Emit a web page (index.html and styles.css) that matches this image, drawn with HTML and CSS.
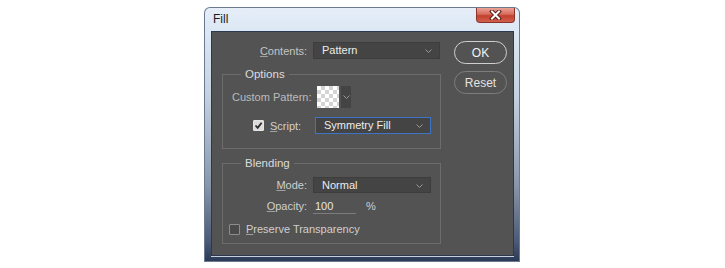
FILE: index.html
```html
<!DOCTYPE html>
<html>
<head>
    <title>Fill</title>
    <link rel="stylesheet" href="styles.css">
</head>
<body>
    <div class="window">
        <div class="titlebar">
            <span class="title">Fill</span>
            <span class="close">
                <svg width="13" height="10" viewBox="0 0 13 10">
                    <path d="M3 1.5 L10 8.5 M10 1.5 L3 8.5" stroke="#5a1d16" stroke-width="4" stroke-linecap="square"/>
                    <path d="M3 1.5 L10 8.5 M10 1.5 L3 8.5" stroke="#ffffff" stroke-width="2" stroke-linecap="square"/>
                </svg>
            </span>
        </div>
        <div class="client">
            <div class="main">
                <div class="row contents">
                    <label class="lbl right"><u>C</u>ontents:</label>
                    <div class="select sel-contents">Pattern<svg class="chev" width="7" height="4" viewBox="0 0 7 4"><path d="M0.5 0.5 L3.5 3.5 L6.5 0.5" fill="none" stroke="#9a9a9a"/></svg></div>
                </div>

                <fieldset class="group options">
                    <legend>Options</legend>
                    <div class="row pattern">
                        <label class="lbl dim pat-lbl">Custom Pattern:</label>
                        <span class="swatch"></span>
                        <span class="swatch-btn"><svg width="7" height="4" viewBox="0 0 7 4"><path d="M0.5 0.5 L3.5 3.5 L6.5 0.5" fill="none" stroke="#9a9a9a"/></svg></span>
                    </div>
                    <div class="row script">
                        <span class="check on">
                            <svg width="9" height="9" viewBox="0 0 9 9"><path d="M1.5 4.5 L3.7 6.8 L7.6 1.8" fill="none" stroke="#2b2b2b" stroke-width="1.8"/></svg>
                        </span>
                        <label class="lbl script-lbl"><u>S</u>cript:</label>
                        <div class="select sel-script">Symmetry Fill<svg class="chev" width="7" height="4" viewBox="0 0 7 4"><path d="M0.5 0.5 L3.5 3.5 L6.5 0.5" fill="none" stroke="#9a9a9a"/></svg></div>
                    </div>
                </fieldset>

                <fieldset class="group blending">
                    <legend>Blending</legend>
                    <div class="row mode">
                        <label class="lbl right short"><u>M</u>ode:</label>
                        <div class="select sel-mode">Normal<svg class="chev" width="7" height="4" viewBox="0 0 7 4"><path d="M0.5 0.5 L3.5 3.5 L6.5 0.5" fill="none" stroke="#9a9a9a"/></svg></div>
                    </div>
                    <div class="row opacity">
                        <label class="lbl right short"><u>O</u>pacity:</label>
                        <span class="num">100</span>
                        <span class="pct">%</span>
                    </div>
                    <div class="row preserve">
                        <span class="check"></span>
                        <label class="lbl"><u>P</u>reserve Transparency</label>
                    </div>
                </fieldset>
            </div>

            <div class="buttons">
                <button class="btn ok">OK</button>
                <button class="btn reset">Reset</button>
            </div>
        </div>
    </div>
</body>
</html>
```

FILE: styles.css
```css
body { margin: 0; background: #fff; font-family: "Liberation Sans", Arial, sans-serif; font-size: 11px; }

.window { margin: 7px 0 0 204px; width: 301px; height: 248px; padding: 0 7px 7px 8px; display: flex; flex-direction: column;
    border-radius: 6px 6px 0 0; box-shadow: inset 0 0 0 1px #6b7a90;
    background: linear-gradient(180deg, #e6eef8 0, #dbe7f4 25px, #c4d1e0 35%, #8796ab 70%, #4b5a75 92%, #2a3855 100%); }

.titlebar { flex-shrink: 0; height: 25px; display: flex; justify-content: space-between; align-items: flex-start; }
.title { margin: 5px 0 0 1px; font-size: 12px; line-height: 14px; color: #1b1b1b; }
.close { margin: 1px -2px 0 0; width: 39px; height: 15px; display: flex; align-items: center; justify-content: center; box-sizing: border-box;
    border: 1px solid #8a3329; border-top: none; border-radius: 0 0 4px 4px;
    background: linear-gradient(180deg, #eaa397 0, #d86a5b 45%, #c2402f 55%, #d1604c 100%); }

.client { flex: 1; display: flex; align-items: flex-start; background: #535353; padding: 9px 0 0 10px; box-shadow: 0 0 0 1px #2d3850, 0 1px 0 1px #c5cfdc; }

.main { width: 218px; }
.row { display: flex; align-items: center; }
.lbl { color: #cfcfcf; line-height: 14px; white-space: nowrap; }
.lbl u { text-decoration-color: #a0a0a0; }
.right { text-align: right; }
.dim { color: #bcbcbc; }

.contents { margin-top: 1px; }
.contents .lbl { width: 85px; margin-right: 6px; color: #c4c4c4; }

.select { position: relative; box-sizing: border-box; height: 17px; line-height: 15px; padding-left: 8px; color: #ececec;
    background: #444; border: 1px solid #3d3d3d; }
.chev { position: absolute; right: 7px; top: 6px; }
.sel-contents { width: 127px; }

.group { margin: 8px 0 0; padding: 5px 9px 14px 6px; border: 1px solid #6c6c6c; }
.group legend { margin-left: 12px; padding: 0 4px; line-height: 14px; color: #dcdcdc; font-size: 11.5px; }
.blending { margin-top: 7px; padding-top: 7px; padding-bottom: 7px; }

.pat-lbl { width: 85px; padding-left: 3px; }
.swatch { width: 22px; height: 22px; background-color: #fff; background-image: conic-gradient(#d4d4d4 25%, #fff 0 50%, #d4d4d4 0 75%, #fff 0); background-size: 8px 8px; }
.swatch-btn { margin-left: 2px; width: 10px; height: 22px; background: #444; display: flex; align-items: center; justify-content: center; }

.script { margin-top: 9px; }
.check { width: 11px; height: 11px; box-sizing: border-box; border: 1px solid #8d8d8d; border-radius: 1px; background: #4a4a4a; display: flex; align-items: center; justify-content: center; }
.check.on { background: #dcdcdc; border-color: #e6e6e6; }
.script .check { margin-left: 24px; }
.script-lbl { width: 45px; margin-left: 6px; }
.sel-script { width: 116px; border-color: #3e74c6; height: 17px; }

.short { width: 78px; margin-right: 6px; }
.sel-mode { width: 118px; height: 16px; line-height: 14px; }

.opacity { margin-top: 5px; height: 16px; }
.num { width: 41px; padding-left: 2px; line-height: 14px; color: #e6e6e6; border-bottom: 1px solid #7c7c7c; }
.pct { margin-left: 10px; color: #cfcfcf; }

.preserve { margin-top: 8px; height: 14px; }
.preserve .lbl { margin-left: 6px; }

.buttons { margin-left: 14px; display: flex; flex-direction: column; gap: 7px; }
.btn { width: 53px; height: 23px; border-radius: 12px; background: #535353; font-family: "Liberation Sans", Arial, sans-serif; font-size: 12px; cursor: pointer; }
.ok { border: 1px solid #cfcfcf; color: #f2f2f2; }
.reset { border: 1px solid #7d7d7d; color: #e2e2e2; }
```
